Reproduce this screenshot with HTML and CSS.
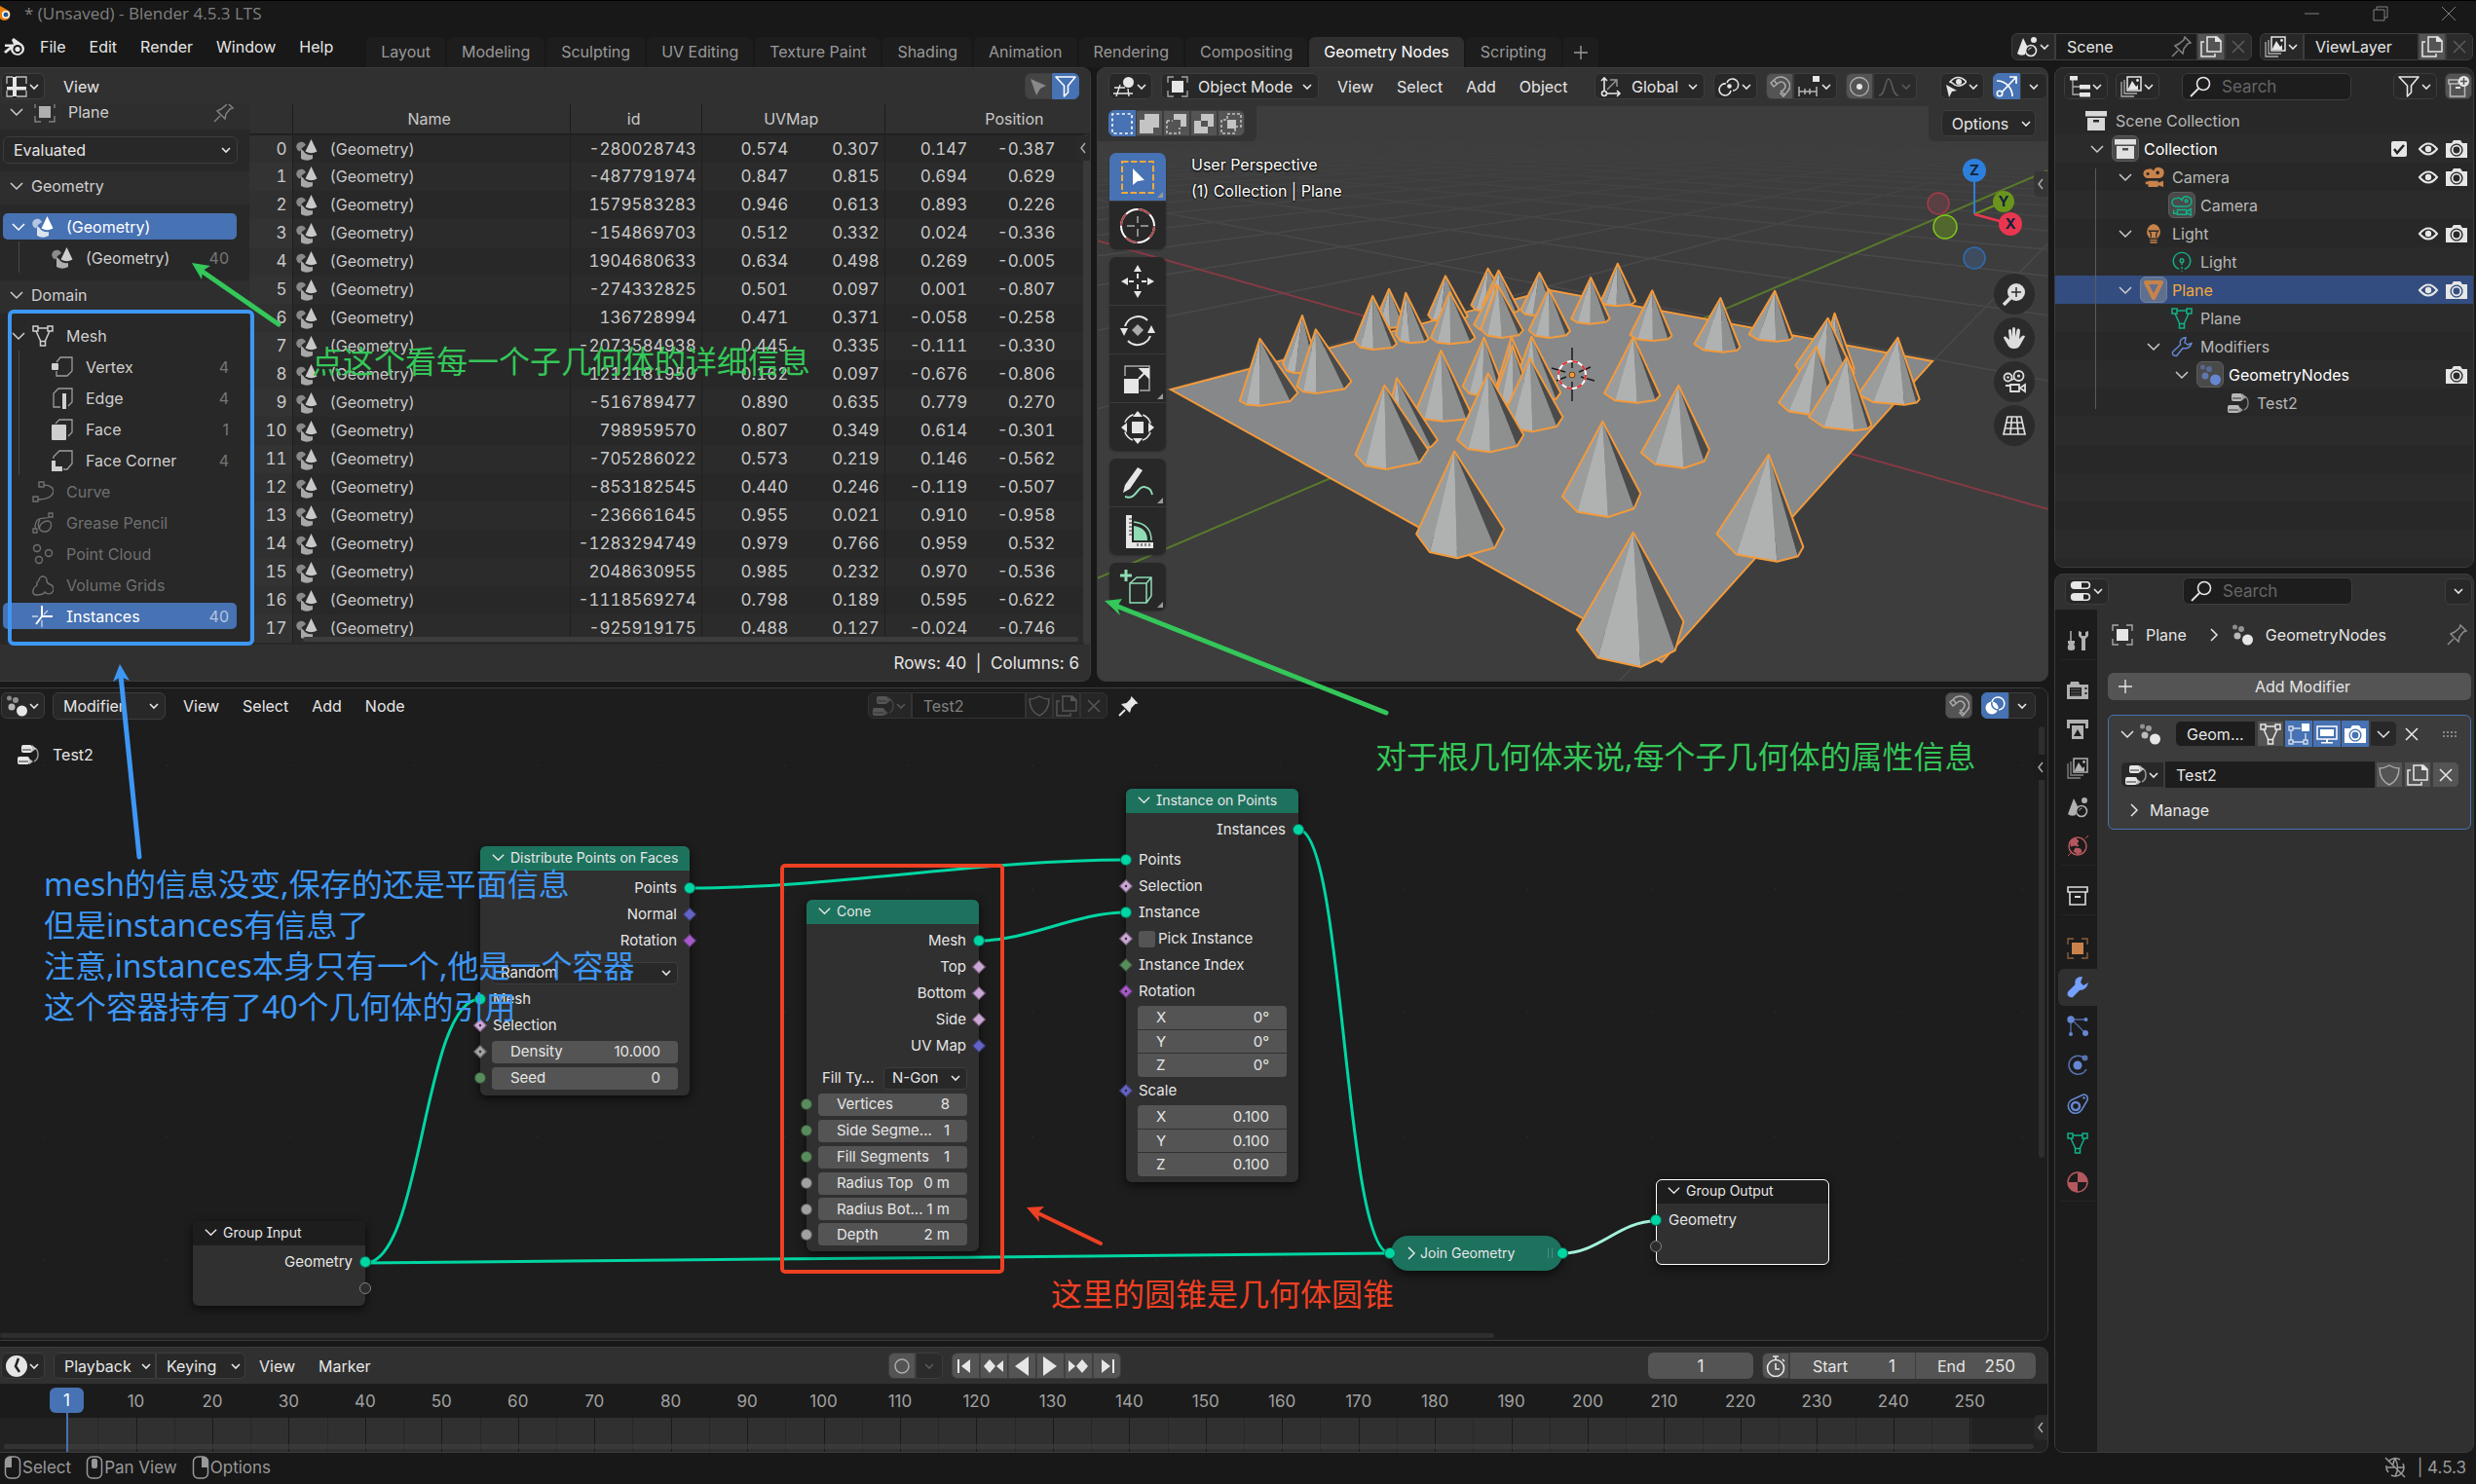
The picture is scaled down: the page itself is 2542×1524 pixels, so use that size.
FILE: index.html
```html
<!DOCTYPE html>
<html lang="en">
<head>
<meta charset="utf-8">
<title>* (Unsaved) - Blender 4.5.3 LTS</title>
<link rel="stylesheet" href="styles.css">
</head>
<body>
<svg class="defs" aria-hidden="true">
<defs>
<symbol id="down" viewBox="0 0 12 12"><path d="M2 4l4 4 4-4" fill="none" stroke="currentColor" stroke-width="1.6"/></symbol>
<symbol id="open" viewBox="0 0 16 16"><path d="M2 5l6 6 6-6" fill="none" stroke="currentColor" stroke-width="1.5"/></symbol>
<symbol id="closed" viewBox="0 0 16 16"><path d="M5 2l6 6-6 6" fill="none" stroke="currentColor" stroke-width="1.5"/></symbol>
<symbol id="left" viewBox="0 0 12 16"><path d="M8 3L4 8l4 5" fill="none" stroke="currentColor" stroke-width="1.5"/></symbol>
<symbol id="logo" viewBox="0 0 24 22"><path d="M11 2l9 6.6a7 6.6 0 1 1-12 5.2L3 18l-2-2 6-5H2V8.600h9L9 4z" fill="currentColor"/><circle cx="15" cy="13.500" r="4.600" fill="#181818"/><circle cx="15" cy="13.500" r="2.600" fill="currentColor"/></symbol>
<symbol id="sheet" viewBox="0 0 22 22"><path d="M1 8V1h6M10 1h11v7M21 15v6H11M7 21H1v-6" fill="none" stroke="currentColor" stroke-width="1.300" opacity=".8"/><path d="M7 1h4v10h10v3.500H11V21H7v-6.500H1V11h6z" fill="currentColor"/></symbol>
<symbol id="object" viewBox="0 0 22 22"><path d="M1 7V1h6M15 1h6v6M21 15v6h-6M7 21H1v-6" fill="none" stroke="currentColor" stroke-width="1.400" opacity=".65"/><rect x="5" y="5" width="12" height="12" fill="currentColor"/></symbol>
<symbol id="pin" viewBox="0 0 22 22"><path d="M1 21l6-6M4 10l8 8 1-5 4-5 3-1-6-6-1 3-5 4z" fill="none" stroke="currentColor" stroke-width="1.500"/></symbol>
<symbol id="pinned" viewBox="0 0 22 22"><path d="M1 21l6-6" stroke="currentColor" stroke-width="2"/><path d="M3 9l9 9 1.500-5 4-4 3-.5L13.500 1l-1 3-4 4z" fill="currentColor"/></symbol>
<symbol id="geo" viewBox="0 0 22 22"><path d="M10 6a5 5 0 1 0-6 6.500L6 9z" fill="currentColor" opacity=".6"/><path d="M15.500 0l6 12.500q-6 3.500-12 0z" fill="currentColor"/><path d="M5 10q3 2 4 4 4 3 8 2v4q-6 3.500-12 0z" fill="currentColor" opacity=".8"/></symbol>
<symbol id="mesh" viewBox="0 0 22 22"><path d="M6 3h10M4 6l5 11M18 6l-5 11" stroke="currentColor" stroke-width="1.500"/><path d="M1 1h5v5H1zM16 1h5v5h-5zM8.500 16.500h5v4.500h-5z" fill="none" stroke="currentColor" stroke-width="1.500"/></symbol>
<symbol id="vert" viewBox="0 0 22 22"><path d="M5 6l4-5h12v14l-5 5H5v-5" fill="none" stroke="currentColor" stroke-width="1.300" opacity=".7"/><rect x="0" y="7" width="7" height="7" rx="1" fill="currentColor"/></symbol>
<symbol id="edge" viewBox="0 0 22 22"><path d="M9 20H2V6l5-5h14v14l-4 4" fill="none" stroke="currentColor" stroke-width="1.300" opacity=".7"/><rect x="11" y="6" width="4" height="16" fill="currentColor"/></symbol>
<symbol id="face" viewBox="0 0 22 22"><path d="M4 5l4-4h13v13l-4 4" fill="none" stroke="currentColor" stroke-width="1.300" opacity=".7"/><rect y="6" width="15" height="16" rx="1" fill="currentColor"/></symbol>
<symbol id="corner" viewBox="0 0 22 22"><path d="M2 9V7l6-6h13v13l-5 6h-4" fill="none" stroke="currentColor" stroke-width="1.300" opacity=".7"/><path d="M0 11h4v6h7v5H0z" fill="currentColor"/></symbol>
<symbol id="curve" viewBox="0 0 22 22"><path d="M1 16h5v5H1zM7 1h5v5H7zM6 19c20 0 20-15 6-15" fill="none" stroke="currentColor" stroke-width="1.400"/></symbol>
<symbol id="gp" viewBox="0 0 22 22"><path d="M1 17h4v4H1zM17 1h4v4h-4zM3 17C3 2 12 8 18 5M8 18c-2-6 5-9 8-9 6 0 4 11-3 11s-8-8-5-12" fill="none" stroke="currentColor" stroke-width="1.300"/></symbol>
<symbol id="cloud" viewBox="0 0 22 22"><g fill="none" stroke="currentColor" stroke-width="1.400"><circle cx="5" cy="5" r="3.500"/><circle cx="17" cy="10" r="3.500"/><circle cx="7" cy="17" r="3.500"/></g></symbol>
<symbol id="volume" viewBox="0 0 22 22"><path d="M7 6a4 4 0 1 1 8 0q0 3 3 4a5 5 0 1 1-5 8q-2 3-8 3-5 0-4-5 1-3 4-5-1-3 2-5z" fill="none" stroke="currentColor" stroke-width="1.400"/></symbol>
<symbol id="axes" viewBox="0 0 22 22"><path d="M10 0v11h11M10 11l-6 8" fill="none" stroke="currentColor" stroke-width="2"/><path d="M0 11h6M10 15v7M12 9l4-4" stroke="currentColor" stroke-width="1.300" opacity=".7"/></symbol>
<symbol id="arrow" viewBox="0 0 22 22"><path d="M3 3l16 7-6 3-4 7z" fill="currentColor"/></symbol>
<symbol id="funnel" viewBox="0 0 22 22"><path d="M1 1h20l-7.500 9v7l-4 4V10z" fill="none" stroke="currentColor" stroke-width="1.600" stroke-linejoin="round"/></symbol>
<symbol id="view3d" viewBox="0 0 22 22"><path d="M1 12h11M0 18h20M7 9L3 21M15 13l1 8" stroke="currentColor" stroke-width="1.400"/><circle cx="15.500" cy="6.500" r="5.500" fill="currentColor"/></symbol>
<symbol id="sel1" viewBox="0 0 22 22"><rect x="1" y="1" width="20" height="20" fill="none" stroke="currentColor" stroke-width="1.600" stroke-dasharray="3 2.700" stroke-dashoffset="1.500"/></symbol>
<symbol id="sel2" viewBox="0 0 22 22"><path d="M6 1h15v14h-6v6H1V7h5z" fill="currentColor"/></symbol>
<symbol id="sel3" viewBox="0 0 22 22"><path d="M8 1h13v13h-6V7H8z" fill="currentColor"/><path d="M1 8h6M1 8v13h13v-6" fill="none" stroke="currentColor" stroke-width="1.500" stroke-dasharray="3 2"/></symbol>
<symbol id="sel4" viewBox="0 0 22 22"><path fill-rule="evenodd" d="M8 1h13v13h-6v7H1V8h7zM8 8v6h7V8z" fill="currentColor"/></symbol>
<symbol id="sel5" viewBox="0 0 22 22"><path d="M7 6V1h14v13h-5M6 7H1v14h14v-5" fill="none" stroke="currentColor" stroke-width="1.500" stroke-dasharray="3 2"/><rect x="7" y="7" width="9" height="9" fill="currentColor"/></symbol>
<symbol id="orient" viewBox="0 0 22 22"><g fill="none" stroke="currentColor" stroke-width="1.600"><path d="M4 15V2M1 5l3-3 3 3M7 18h13M17 15l3 3-3 3"/><circle cx="4" cy="18" r="2.500"/></g><path d="M7 14l9-9M10 4h7v7" fill="none" stroke="currentColor" stroke-width="1.400" opacity=".6"/></symbol>
<symbol id="pivot" viewBox="0 0 22 22"><g fill="none" stroke="currentColor" stroke-width="1.600"><path d="M9 7a6 6 0 1 1 6 8M13 15a6 6 0 1 1-5-7"/></g><circle cx="11.500" cy="10.500" r="2.300" fill="currentColor"/></symbol>
<symbol id="magnet" viewBox="0 0 22 22"><path d="M2 7l6-5c9-4 17 6 12 13l-5 6-3-3 4-5c3-4-2-9-6-6L5 11zM5 4l3 4M12 15l4 4" fill="none" stroke="currentColor" stroke-width="1.500"/></symbol>
<symbol id="snapinc" viewBox="0 0 22 22"><path d="M1 11v10M7 13v6M12 13v6M19 11v10M1 16h18" stroke="currentColor" stroke-width="1.500" opacity=".75"/><rect x="15" y="0" width="7" height="6" fill="currentColor"/></symbol>
<symbol id="prop" viewBox="0 0 22 22"><circle cx="11" cy="11" r="9.500" fill="none" stroke="currentColor" stroke-width="1.300" opacity=".6"/><circle cx="11" cy="11" r="3" fill="currentColor"/></symbol>
<symbol id="falloff" viewBox="0 0 22 22"><path d="M1 20c7 0 6-17 10-17s3 17 10 17" fill="none" stroke="currentColor" stroke-width="1.600"/></symbol>
<symbol id="eyesel" viewBox="0 0 22 22"><path d="M5 6q8-9 17 0-8 8-15 1z" fill="none" stroke="currentColor" stroke-width="1.600"/><circle cx="14" cy="6" r="3" fill="currentColor"/><path d="M1 9l11 6-5 1-3 6z" fill="currentColor"/></symbol>
<symbol id="gizmo" viewBox="0 0 22 22"><path d="M1 5c10 0 16 8 16 16M6 17L20 2M14 1h7v7" fill="none" stroke="currentColor" stroke-width="1.700"/><circle cx="4" cy="18" r="2.700" fill="none" stroke="currentColor" stroke-width="1.600"/></symbol>
<symbol id="overlay" viewBox="0 0 22 22"><path d="M8 7a6.500 6.500 0 1 1 7 8" fill="none" stroke="currentColor" stroke-width="1.600"/><circle cx="8" cy="13" r="6.500" fill="currentColor"/><path d="M8 7a6.500 6.500 0 0 0 7 8" fill="none" stroke="#4772b3" stroke-width="1.500"/></symbol>
<symbol id="scenes" viewBox="0 0 22 22"><path d="M7 2l4 8-2 9q-5 2-8-1z" fill="currentColor"/><circle cx="18" cy="4" r="3" fill="currentColor"/><circle cx="15" cy="15" r="5.500" fill="none" stroke="currentColor" stroke-width="1.600"/><path d="M12.500 14.500q1-2.500 3-2.500" fill="none" stroke="currentColor"/></symbol>
<symbol id="images" viewBox="0 0 22 22"><path d="M1 6v15h13M4 4v14h13" fill="none" stroke="currentColor" stroke-width="1.300" opacity=".7"/><rect x="7" y="1" width="14" height="14" fill="none" stroke="currentColor" stroke-width="1.500"/><path d="M8 13l4-8 4 6 2-2v5H8z" fill="currentColor"/><circle cx="17.500" cy="4.500" r="1.400" fill="currentColor"/></symbol>
<symbol id="copy" viewBox="0 0 22 22"><path d="M4 6H1v15h14v-3M7 1h10l4 4v11H7z" fill="none" stroke="currentColor" stroke-width="1.500"/><path d="M15 0l7 6h-7z" fill="currentColor"/></symbol>
<symbol id="x" viewBox="0 0 22 22"><path d="M5 5l12 12M17 5L5 17" stroke="currentColor" stroke-width="1.600"/></symbol>
<symbol id="plus" viewBox="0 0 16 16"><path d="M8 1v14M1 8h14" stroke="currentColor" stroke-width="1.400"/></symbol>
<symbol id="tree" viewBox="0 0 22 22"><path d="M4 4v15h7M4 11h7" fill="none" stroke="currentColor" stroke-width="1.300" opacity=".7"/><path d="M1 0h8v4.500H1zM11 9h11v4.500H11zM11 17h11v4.500H11z" fill="currentColor"/></symbol>
<symbol id="search" viewBox="0 0 22 22"><circle cx="14" cy="8" r="6.500" fill="none" stroke="currentColor" stroke-width="1.600"/><path d="M9 13l-8 8" stroke="currentColor" stroke-width="1.800"/></symbol>
<symbol id="newcoll" viewBox="0 0 22 22"><path d="M1 4h10v4H1zM2.500 8v13h15v-10" fill="none" stroke="currentColor" stroke-width="1.500" opacity=".7"/><path d="M8 12h5" stroke="currentColor" stroke-width="2"/><circle cx="16.500" cy="5.500" r="5.500" fill="currentColor"/><path d="M16.500 2v7M13 5.500h7" stroke="#545454" stroke-width="1.500"/></symbol>
<symbol id="coll" viewBox="0 0 22 22"><path fill-rule="evenodd" d="M0 1h22v5.500H0zM2 8h18v13H2zM8 10v2.500h6V10z" fill="currentColor"/></symbol>
<symbol id="collo" viewBox="0 0 22 22"><path d="M1 2h20v5H1zM3 7v13h16V7" fill="none" stroke="currentColor" stroke-width="1.600"/><path d="M8 12h6" stroke="currentColor" stroke-width="2"/></symbol>
<symbol id="eye" viewBox="0 0 22 22"><path d="M2 11q9-11 18 0-9 11-18 0z" fill="none" stroke="currentColor" stroke-width="2"/><circle cx="11" cy="11" r="3.200" fill="currentColor"/></symbol>
<symbol id="cam" viewBox="0 0 22 22"><path fill-rule="evenodd" d="M0 5h6l2-3h7l2 3h5v15H0zM11 5.500a6.500 6.500 0 1 0 .1 0z" fill="currentColor"/><circle cx="11" cy="12" r="4.300" fill="none" stroke="currentColor" stroke-width="1.800"/></symbol>
<symbol id="camobj" viewBox="0 0 24 24"><path fill-rule="evenodd" d="M6 3a5 5 0 0 1 6 2 6 6 0 1 1 6 8H5a5 5 0 0 1 1-10zM5.500 6.500a1.700 1.700 0 1 0 .1 0zM16.500 5a2 2 0 1 0 .1 0zM6 16h11v2l6-2v7l-6-2v2H6v-3H3v-3h3z" fill="currentColor"/></symbol>
<symbol id="camdata" viewBox="0 0 24 24"><g fill="none" stroke="currentColor" stroke-width="1.600"><path d="M6 4a5 5 0 0 1 6 2 5.500 5.500 0 1 1 6 7H5a4.500 4.500 0 0 1 1-9zM7 17h10v5H7zM17 19l5-3v7l-5-3M3 17v4h4"/><circle cx="17" cy="7" r="1.500"/></g></symbol>
<symbol id="camview" viewBox="0 0 24 24"><g fill="none" stroke="currentColor" stroke-width="1.800"><circle cx="5.500" cy="7.500" r="4"/><circle cx="16.500" cy="6" r="5"/><path d="M8 15h9v7H8zM3 16h5v4M23 15l-5 3.500 5 3.500zM9 10l3-1"/></g><circle cx="5.500" cy="7.500" r="1.300" fill="currentColor"/><circle cx="16.500" cy="6" r="1.600" fill="currentColor"/></symbol>
<symbol id="light" viewBox="0 0 22 24"><path d="M11 1a9 9 0 0 1 5 15v1H6v-1A9 9 0 0 1 11 1zM7 18.500h8V20H7zM7 21h8v1.500H7z" fill="currentColor"/><path d="M8 16v-4L6 9h10l-2 3v4" fill="none" stroke="#2a2a2a" stroke-width="1.400"/></symbol>
<symbol id="lightdata" viewBox="0 0 22 24"><path d="M8 20a9.500 9.500 0 1 1 6 0" fill="none" stroke="currentColor" stroke-width="1.500"/><circle cx="11" cy="10.500" r="2" fill="none" stroke="currentColor" stroke-width="1.500"/><path d="M11 13v10" stroke="currentColor" stroke-width="1.500" stroke-dasharray="2.500 2"/></symbol>
<symbol id="meshobj" viewBox="0 0 22 22"><path d="M3 3h16l-8 16z" fill="none" stroke="currentColor" stroke-width="4" stroke-linejoin="round"/></symbol>
<symbol id="wrencho" viewBox="0 0 22 22"><path d="M15 1.500q-7 1-5.500 7.500L1.500 16.500q-1 4 4 4L12 12.500q7 1.500 9-5l-4 1.500-3-2z" fill="none" stroke="currentColor" stroke-width="1.500" stroke-linejoin="round"/></symbol>
<symbol id="wrench" viewBox="0 0 22 22"><path d="M16 0Q7 0 8.500 8L1 15.500q-2 5.500 4.500 6L13 14q7 0 9-8l-5 3-3-3z" fill="currentColor"/></symbol>
<symbol id="gn" viewBox="0 0 22 22"><g fill="currentColor"><circle cx="3.500" cy="3" r="2.500" opacity=".5"/><circle cx="10" cy="5" r="3" opacity=".55"/><circle cx="6" cy="12" r="3.500" opacity=".75"/><circle cx="16.500" cy="16" r="5.500"/></g></symbol>
<symbol id="ntree" viewBox="0 0 22 22"><rect x="4" y="1" width="11" height="8" rx="2" fill="currentColor"/><rect x="0" y="13" width="12" height="8" rx="2" fill="currentColor"/><path d="M5 6h9M1 18h10" stroke="#333" stroke-width="1"/><path d="M17 4q4 1 4 7 0 5-4 7" fill="none" stroke="currentColor" stroke-width="1.500" opacity=".6"/><path d="M15 1l4 4-4 3zM12 15l4 3-4 3z" fill="currentColor" opacity=".8"/></symbol>
<symbol id="props" viewBox="0 0 22 22"><rect x=".8" y="1" width="20.400" height="8" rx="4" fill="currentColor"/><rect x=".8" y="13" width="20.400" height="8" rx="4" fill="currentColor"/><path d="M12 2.500h5a2.500 2.500 0 0 1 0 5h-5zM14 14.500h3a2.500 2.500 0 0 1 0 5h-3z" fill="#222"/></symbol>
<symbol id="tools" viewBox="0 0 22 22"><path d="M4 1v10" stroke="currentColor" stroke-width="1.500"/><path d="M1 11h7v3H7q2 3 1 6-4 2-7 0-1-3 1-6H1zM12 1v5l3 3v12h4V9l3-3V1l-3 1v4h-4V2z" fill="currentColor"/></symbol>
<symbol id="render" viewBox="0 0 22 22"><path fill-rule="evenodd" d="M0 5h3l1-3h8l1 3h9v15H0zM3 8v9h12V8zM18.500 8v2h2V8zM18.500 13v2h2v-2z" fill="currentColor"/><path d="M4 10h10M4 13h10M4 16h10" stroke="currentColor" stroke-width="1" opacity=".5"/></symbol>
<symbol id="output" viewBox="0 0 22 22"><path fill-rule="evenodd" d="M0 1h22v9h-3V5H3v5H0zM5 7h12v14H5zM7 18h8l-4-7z" fill="currentColor"/></symbol>
<symbol id="world" viewBox="0 0 22 22"><circle cx="11" cy="11" r="9" fill="none" stroke="currentColor" stroke-width="1.500"/><path d="M4 5l5-2 3 3-2 2 2 3-4-1-4 1zM9 13l5 1 1 3-4 2-4-3zM1 21l3-3M19 3l3-3" fill="currentColor" stroke="currentColor"/></symbol>
<symbol id="particles" viewBox="0 0 22 22"><path d="M5 4h14M4 6v12M7 6l12 12" stroke="currentColor" stroke-width="1.400" opacity=".7"/><g fill="currentColor"><circle cx="4" cy="4" r="3.700"/><circle cx="19.500" cy="4" r="2"/><circle cx="19" cy="18" r="3"/><circle cx="4" cy="19" r="2"/></g></symbol>
<symbol id="physics" viewBox="0 0 22 22"><path d="M17 3A9.500 9.500 0 1 0 20 15" fill="none" stroke="currentColor" stroke-width="1.500" opacity=".8"/><circle cx="11" cy="11" r="4.500" fill="currentColor"/><circle cx="18.500" cy="3.500" r="3" fill="currentColor" opacity=".8"/></symbol>
<symbol id="constraint" viewBox="0 0 22 22"><path d="M4 7L17 1q5 0 4 6l-6 10A7.500 7.500 0 1 1 4 7z" fill="none" stroke="currentColor" stroke-width="1.600"/><circle cx="9" cy="13" r="4" fill="none" stroke="currentColor" stroke-width="2.500"/><circle cx="17.500" cy="4.500" r="1.300" fill="currentColor"/></symbol>
<symbol id="material" viewBox="0 0 22 22"><circle cx="11" cy="11" r="10" fill="none" stroke="currentColor" stroke-width="1.500"/><path d="M11 1a10 10 0 0 1 10 10H11zM11 11v10A10 10 0 0 1 1 11z" fill="currentColor"/></symbol>
<symbol id="shield" viewBox="0 0 22 22"><path d="M11 1q5 3 10 3 0 12-10 17Q1 16 1 4q5 0 10-3z" fill="none" stroke="currentColor" stroke-width="1.400"/></symbol>
<symbol id="editmode" viewBox="0 0 22 22"><path d="M1 3h4v4H1zM1 17h4v4H1zM16 17h4v4h-4zM5 5h8M3 7v10M5 19h11M18 10v7" fill="none" stroke="currentColor" stroke-width="1.400" opacity=".75"/><rect x="14" y="0" width="8" height="8" fill="currentColor"/></symbol>
<symbol id="monitor" viewBox="0 0 22 22"><rect x="1" y="3" width="20" height="13" fill="none" stroke="currentColor" stroke-width="1.500"/><path d="M4 6h14v7H4zM10 16h2v3h5v1.500H5V19h5z" fill="currentColor"/></symbol>
<symbol id="clock" viewBox="0 0 22 22"><circle cx="11" cy="11" r="11" fill="currentColor"/><path d="M13 3l-3 8 4 6" fill="none" stroke="#222" stroke-width="2.500"/></symbol>
<symbol id="stopwatch" viewBox="0 0 22 22"><circle cx="11" cy="13" r="8.500" fill="none" stroke="currentColor" stroke-width="1.600"/><path d="M8 1h6M11 1v3M18 4l2 2M11 8v6h4" fill="none" stroke="currentColor" stroke-width="1.600"/></symbol>
<symbol id="ring" viewBox="0 0 22 22"><circle cx="11" cy="11" r="7" fill="none" stroke="currentColor" stroke-width="1.500"/></symbol>
<symbol id="first" viewBox="0 0 22 22"><path d="M3 4h2v14H3zM16 4v14l-9-7z" fill="currentColor"/></symbol>
<symbol id="prevkey" viewBox="0 0 22 22"><path d="M7 4l6 7-6 7-6-7zM21 5v12l-7-6z" fill="currentColor"/></symbol>
<symbol id="playback" viewBox="0 0 22 22"><path d="M18 1v20L4 11z" fill="currentColor"/></symbol>
<symbol id="mouseL" viewBox="0 0 18 24"><rect x="1.500" y="1" width="15" height="22" rx="5" fill="none" stroke="currentColor" stroke-width="1.500"/><path d="M1 12V6q0-5 7-5v11z" fill="currentColor"/></symbol>
<symbol id="mouseM" viewBox="0 0 18 24"><rect x="1.500" y="1" width="15" height="22" rx="5" fill="none" stroke="currentColor" stroke-width="1.500"/><rect x="6" y="3" width="6" height="10" rx="2" fill="currentColor"/></symbol>
<symbol id="net" viewBox="0 0 22 22"><path d="M4 5a9 9 0 0 1 12-2M19 7a9 9 0 0 1-12 12M2 9a9 9 0 0 0 2 7M11 2q5 9 0 18M11 2q-2 3-2 6M3 11h7M14 11h6M1 1l20 20" fill="none" stroke="currentColor" stroke-width="1.500"/></symbol>
<symbol id="hand" viewBox="0 0 24 24"><path d="M7 14L6 5q0-2 1.500-2T9 5l1 6V3q0-2 1.500-2T13 3v8l1.500-7q.5-2 2-1.500T18 5l-1 8 3-3q2-1 3 .5l-5 9q-2 4-7 3.500-4 0-6-4l-4-7q0-2 2-1.500z" fill="currentColor"/></symbol>
<symbol id="zoomin" viewBox="0 0 24 24"><circle cx="14" cy="10" r="9" fill="currentColor"/><path d="M8 16l-7 7" stroke="currentColor" stroke-width="3.500"/><path d="M14 5v10M9 10h10" stroke="#2b2b2b" stroke-width="1.500"/></symbol>
<symbol id="grid" viewBox="0 0 24 24"><path d="M5 3h14l4 18H1zM4 9h16M3 15h19M9.500 3L8 21M14.500 3L16 21" fill="none" stroke="currentColor" stroke-width="1.700"/></symbol>
</defs>
</svg>

<header class="titlebar">
  <svg class="app" viewBox="0 0 14 18"><path d="M0 1l9 5a6 6 0 1 1-9 8z" fill="#e87d0d"/><circle cx="6" cy="10" r="4" fill="#fff"/><circle cx="6" cy="10" r="2.500" fill="#265787"/></svg>
  <span class="wintitle">* (Unsaved) - Blender 4.5.3 LTS</span>
  <div class="winctl">
    <button aria-label="Minimize"><svg viewBox="0 0 16 16"><path d="M0 8h15" stroke="currentColor"/></svg></button>
    <button aria-label="Restore"><svg viewBox="0 0 16 16"><path d="M1 4h11v11H1zM4 4V1h11v11h-3" fill="none" stroke="currentColor"/></svg></button>
    <button aria-label="Close"><svg viewBox="0 0 16 16"><path d="M1 1l14 14M15 1L1 15" stroke="currentColor"/></svg></button>
  </div>
</header>

<nav class="topbar">
  <svg class="logo"><use href="#logo"/></svg>
  <div class="menus"><button>File</button><button>Edit</button><button>Render</button><button>Window</button><button>Help</button></div>
  <div class="tabs">
    <button>Layout</button><button>Modeling</button><button>Sculpting</button><button>UV Editing</button><button>Texture Paint</button><button>Shading</button><button>Animation</button><button>Rendering</button><button>Compositing</button><button class="on">Geometry Nodes</button><button>Scripting</button><button class="add" aria-label="Add workspace"><svg class="s"><use href="#plus"/></svg></button>
  </div>
  <div class="joined idfield">
    <button class="btn type" aria-label="Browse scene"><svg class="i"><use href="#scenes"/></svg><svg class="c"><use href="#down"/></svg></button>
    <label class="namebox scenebox"><input aria-label="Scene" value="Scene"><svg class="i dim"><use href="#pin"/></svg></label>
    <button class="btn sq lit" aria-label="New scene"><svg class="i"><use href="#copy"/></svg></button>
    <button class="btn sq off" aria-label="Delete scene"><svg class="i"><use href="#x"/></svg></button>
  </div>
  <div class="joined idfield">
    <button class="btn type" aria-label="Browse view layer"><svg class="i"><use href="#images"/></svg><svg class="c"><use href="#down"/></svg></button>
    <label class="namebox layerbox"><input aria-label="View layer" value="ViewLayer"></label>
    <button class="btn sq lit" aria-label="New view layer"><svg class="i"><use href="#copy"/></svg></button>
    <button class="btn sq off" aria-label="Delete view layer"><svg class="i"><use href="#x"/></svg></button>
  </div>
</nav>

<main class="workspace">
<div class="col-left">
<div class="row-top">

<section class="editor sheet">
  <header class="bar">
    <button class="btn type" aria-label="Editor type"><svg class="i"><use href="#sheet"/></svg><svg class="c"><use href="#down"/></svg></button>
    <div class="menus"><button>View</button></div>
    <div class="joined push">
      <button class="btn sq lit faint" aria-label="Selected only"><svg class="i"><use href="#arrow"/></svg></button>
      <button class="btn sq blue" aria-label="Use filter"><svg class="i"><use href="#funnel"/></svg></button>
    </div>
  </header>
  <div class="sheetbody">
    <aside class="side">
      <div class="ctx"><svg class="s"><use href="#open"/></svg><svg class="i"><use href="#object"/></svg><span>Plane</span><svg class="i dim end"><use href="#pin"/></svg></div>
      <div class="evalbox"><select class="drop" aria-label="Object evaluation state"><option>Evaluated</option></select></div>
      <h2 class="sec"><svg class="s"><use href="#open"/></svg>Geometry</h2>
      <ul class="list geolist">
        <li class="sel"><svg class="s"><use href="#open"/></svg><svg class="i"><use href="#geo"/></svg><span>(Geometry)</span></li>
        <li class="sub lined"><svg class="i"><use href="#geo"/></svg><span>(Geometry)</span><em>40</em></li>
      </ul>
      <h2 class="sec"><svg class="s"><use href="#open"/></svg>Domain</h2>
      <ul class="list domlist">
        <li><svg class="s"><use href="#open"/></svg><svg class="i"><use href="#mesh"/></svg><span>Mesh</span></li>
        <li class="sub lined"><svg class="i"><use href="#vert"/></svg><span>Vertex</span><em>4</em></li>
        <li class="sub lined"><svg class="i"><use href="#edge"/></svg><span>Edge</span><em>4</em></li>
        <li class="sub lined"><svg class="i"><use href="#face"/></svg><span>Face</span><em>1</em></li>
        <li class="sub lined"><svg class="i"><use href="#corner"/></svg><span>Face Corner</span><em>4</em></li>
        <li class="none"><svg class="i"><use href="#curve"/></svg><span>Curve</span></li>
        <li class="none"><svg class="i"><use href="#gp"/></svg><span>Grease Pencil</span></li>
        <li class="none"><svg class="i"><use href="#cloud"/></svg><span>Point Cloud</span></li>
        <li class="none"><svg class="i"><use href="#volume"/></svg><span>Volume Grids</span></li>
        <li class="sel flat"><svg class="i"><use href="#axes"/></svg><span>Instances</span><em>40</em></li>
      </ul>
    </aside>
    <div class="tablewrap">
      <table>
        <colgroup><col class="w-idx"><col class="w-name"><col class="w-id"><col class="w-uv"><col class="w-uv"><col class="w-pos"><col class="w-pos"><col class="w-pos"></colgroup>
        <thead><tr><th></th><th>Name</th><th>id</th><th colspan="2">UVMap</th><th colspan="3">Position</th></tr></thead>
        <tbody>
        <tr><th>0</th><td><svg class="i"><use href="#geo"/></svg>(Geometry)</td><td>-280028743</td><td>0.574</td><td>0.307</td><td>0.147</td><td>-0.387</td><td></td></tr>
        <tr><th>1</th><td><svg class="i"><use href="#geo"/></svg>(Geometry)</td><td>-487791974</td><td>0.847</td><td>0.815</td><td>0.694</td><td>0.629</td><td></td></tr>
        <tr><th>2</th><td><svg class="i"><use href="#geo"/></svg>(Geometry)</td><td>1579583283</td><td>0.946</td><td>0.613</td><td>0.893</td><td>0.226</td><td></td></tr>
        <tr><th>3</th><td><svg class="i"><use href="#geo"/></svg>(Geometry)</td><td>-154869703</td><td>0.512</td><td>0.332</td><td>0.024</td><td>-0.336</td><td></td></tr>
        <tr><th>4</th><td><svg class="i"><use href="#geo"/></svg>(Geometry)</td><td>1904680633</td><td>0.634</td><td>0.498</td><td>0.269</td><td>-0.005</td><td></td></tr>
        <tr><th>5</th><td><svg class="i"><use href="#geo"/></svg>(Geometry)</td><td>-274332825</td><td>0.501</td><td>0.097</td><td>0.001</td><td>-0.807</td><td></td></tr>
        <tr><th>6</th><td><svg class="i"><use href="#geo"/></svg>(Geometry)</td><td>136728994</td><td>0.471</td><td>0.371</td><td>-0.058</td><td>-0.258</td><td></td></tr>
        <tr><th>7</th><td><svg class="i"><use href="#geo"/></svg>(Geometry)</td><td>-2073584938</td><td>0.445</td><td>0.335</td><td>-0.111</td><td>-0.330</td><td></td></tr>
        <tr><th>8</th><td><svg class="i"><use href="#geo"/></svg>(Geometry)</td><td>1212181950</td><td>0.162</td><td>0.097</td><td>-0.676</td><td>-0.806</td><td></td></tr>
        <tr><th>9</th><td><svg class="i"><use href="#geo"/></svg>(Geometry)</td><td>-516789477</td><td>0.890</td><td>0.635</td><td>0.779</td><td>0.270</td><td></td></tr>
        <tr><th>10</th><td><svg class="i"><use href="#geo"/></svg>(Geometry)</td><td>798959570</td><td>0.807</td><td>0.349</td><td>0.614</td><td>-0.301</td><td></td></tr>
        <tr><th>11</th><td><svg class="i"><use href="#geo"/></svg>(Geometry)</td><td>-705286022</td><td>0.573</td><td>0.219</td><td>0.146</td><td>-0.562</td><td></td></tr>
        <tr><th>12</th><td><svg class="i"><use href="#geo"/></svg>(Geometry)</td><td>-853182545</td><td>0.440</td><td>0.246</td><td>-0.119</td><td>-0.507</td><td></td></tr>
        <tr><th>13</th><td><svg class="i"><use href="#geo"/></svg>(Geometry)</td><td>-236661645</td><td>0.955</td><td>0.021</td><td>0.910</td><td>-0.958</td><td></td></tr>
        <tr><th>14</th><td><svg class="i"><use href="#geo"/></svg>(Geometry)</td><td>-1283294749</td><td>0.979</td><td>0.766</td><td>0.959</td><td>0.532</td><td></td></tr>
        <tr><th>15</th><td><svg class="i"><use href="#geo"/></svg>(Geometry)</td><td>2048630955</td><td>0.985</td><td>0.232</td><td>0.970</td><td>-0.536</td><td></td></tr>
        <tr><th>16</th><td><svg class="i"><use href="#geo"/></svg>(Geometry)</td><td>-1118569274</td><td>0.798</td><td>0.189</td><td>0.595</td><td>-0.622</td><td></td></tr>
        <tr><th>17</th><td><svg class="i"><use href="#geo"/></svg>(Geometry)</td><td>-925919175</td><td>0.488</td><td>0.127</td><td>-0.024</td><td>-0.746</td><td></td></tr>
        </tbody>
      </table>
      <i class="vscroll"></i><i class="hscroll"></i>
      <button class="flap sheetflap" aria-label="Show sidebar"><svg><use href="#left"/></svg></button>
    </div>
  </div>
  <footer class="counts">Rows: 40 &nbsp;|&nbsp; Columns: 6</footer>
</section>

<section class="editor view">
  <svg class="scene" id="scene" viewBox="1127 70 975 629" preserveAspectRatio="xMidYMid slice">
    <defs><linearGradient id="fade" x1="0" y1="0" x2="0" y2="1"><stop offset="0" stop-color="#000"/><stop offset="1" stop-color="#fff"/></linearGradient>
    <mask id="haze" maskUnits="userSpaceOnUse" x="1126" y="69" width="977" height="631"><rect x="1126" y="260" width="977" height="440" fill="#fff"/><rect x="1126" y="140" width="977" height="121" fill="url(#fade)"/></mask></defs>
    <rect x="1126" y="69" width="977" height="631" fill="#3d3d3d"/>
    <g id="floor" stroke="#4a4a4a" stroke-width="1.500" mask="url(#haze)"></g>
    <path d="M1126 247L2103 523" stroke="#863a45" stroke-width="2"/>
    <path d="M1126 594L2103 175" stroke="#587a2b" stroke-width="2"/>
    <path d="M1202 400L1591 298L1984 371L1706 680z" fill="#868889" stroke="#f29a3c" stroke-width="2"/>
    <g id="cones"></g>
    <g fill="none" stroke-width="2"><path d="M1614 357v21M1614 392v20M1593 378l14 4M1633 377l-12 5M1598 391l10-4M1637 391l-14-4" stroke="#1a1a1a" stroke-width="1.500"/><circle cx="1614" cy="385" r="14" stroke="#fff"/><circle cx="1614" cy="385" r="14" stroke="#e3302f" stroke-dasharray="5.500 5.500"/></g>
    <circle cx="1614" cy="385" r="3" fill="#f29a3c" stroke="#704010"/>
  </svg>
  <header class="bar">
    <button class="btn type" aria-label="Editor type"><svg class="i"><use href="#view3d"/></svg><svg class="c"><use href="#down"/></svg></button>
    <label class="icondrop mode"><svg class="i"><use href="#object"/></svg><select class="drop" aria-label="Mode"><option>Object Mode</option></select></label>
    <div class="menus"><button>View</button><button>Select</button><button>Add</button><button>Object</button></div>
    <label class="icondrop orient push"><svg class="i"><use href="#orient"/></svg><select class="drop" aria-label="Transform orientation"><option>Global</option></select></label>
    <button class="btn type" aria-label="Pivot point"><svg class="i"><use href="#pivot"/></svg><svg class="c"><use href="#down"/></svg></button>
    <div class="joined"><button class="btn sq lit soft" aria-label="Snap"><svg class="i"><use href="#magnet"/></svg></button><button class="btn type" aria-label="Snap to"><svg class="i"><use href="#snapinc"/></svg><svg class="c"><use href="#down"/></svg></button></div>
    <div class="joined"><button class="btn sq lit" aria-label="Proportional editing"><svg class="i"><use href="#prop"/></svg></button><button class="btn type off" aria-label="Falloff"><svg class="i"><use href="#falloff"/></svg><svg class="c"><use href="#down"/></svg></button></div>
    <button class="btn type gapped" aria-label="Selectability and visibility"><svg class="i"><use href="#eyesel"/></svg><svg class="c"><use href="#down"/></svg></button>
    <div class="joined cut"><button class="btn sq blue" aria-label="Gizmos"><svg class="i"><use href="#gizmo"/></svg></button><button class="btn sq" aria-label="Gizmo options"><svg class="c"><use href="#down"/></svg></button></div>
  </header>
  <div class="subbar">
    <div class="subleft"><div class="joined">
      <button class="btn sq blue" aria-label="Set"><svg class="i"><use href="#sel1"/></svg></button><button class="btn sq lit" aria-label="Extend"><svg class="i"><use href="#sel2"/></svg></button><button class="btn sq lit" aria-label="Subtract"><svg class="i"><use href="#sel3"/></svg></button><button class="btn sq lit" aria-label="Invert"><svg class="i"><use href="#sel4"/></svg></button><button class="btn sq lit" aria-label="Intersect"><svg class="i"><use href="#sel5"/></svg></button>
    </div></div>
    <div class="subright"><button class="btn opt">Options<svg class="c"><use href="#down"/></svg></button></div>
  </div>
  <div class="stage">
    <div class="toolbox">
      <div class="toolset">
        <button class="on more" aria-label="Select box"><svg viewBox="0 0 36 36"><rect x="2" y="2" width="32" height="32" fill="none" stroke="#f2a93c" stroke-width="2" stroke-dasharray="6.500 2.500"/><path d="M13 9l12 12-7 1-5 4z" fill="#fff"/></svg></button>
        <button aria-label="Cursor"><svg viewBox="0 0 36 36"><g fill="none" stroke-width="2"><circle cx="18" cy="18" r="17" stroke="#fff"/><circle cx="18" cy="18" r="17" stroke="#a8484d" stroke-dasharray="13.350"/><path d="M18 8v7M18 21v8M7 18h8M21 18h8" stroke="#aaa" stroke-width="1.500"/></g></svg></button>
      </div>
      <div class="toolset">
        <button aria-label="Move"><svg viewBox="0 0 36 36"><path d="M18 1l4 7h-8zM18 35l4-7h-8zM1 18l7-4v8zM35 18l-7-4v8z" fill="#e6e6e6"/><path d="M18 10v5M18 21v5M9 18h5M22 18h5" stroke="#e6e6e6" stroke-width="2"/></svg></button>
        <button aria-label="Rotate"><svg viewBox="0 0 36 36"><path d="M5 14a14 14 0 0 1 23-6M31 24a14 14 0 0 1-23 5" fill="none" stroke="#e6e6e6" stroke-width="2"/><path d="M18 12l6 6-6 6-6-6z" fill="#aaa"/><path d="M0 16h8l-4 8zM28 21h8l-4-8z" fill="#e6e6e6"/></svg></button>
        <button class="more" aria-label="Scale"><svg viewBox="0 0 36 36"><path d="M5 15V5h25v25H20" fill="none" stroke="#aaa" stroke-width="1.500"/><rect x="4" y="18" width="15" height="15" fill="#e6e6e6"/><path d="M19 18l7-7M21 8h8v8z" stroke="#e6e6e6" stroke-width="2" fill="#e6e6e6"/></svg></button>
        <button aria-label="Transform"><svg viewBox="0 0 36 36"><circle cx="18" cy="18" r="14" fill="none" stroke="#e6e6e6" stroke-width="1.500" stroke-dasharray="12 10" stroke-dashoffset="-5"/><path d="M12 12h12v12H12zM18 1l5 6H13zM18 35l5-6H13zM1 18l6-5v10zM35 18l-6-5v10z" fill="#e6e6e6"/></svg></button>
      </div>
      <div class="toolset">
        <button class="more" aria-label="Annotate"><svg viewBox="0 0 36 36"><path d="M18 2l5 3L10 24l-7 4 2-8z" fill="#e6e6e6"/><path d="M5 32c12 4 12-11 20-10 6 1 7 4 8 8" fill="none" stroke="#8fdcb5" stroke-width="2"/></svg></button>
        <button aria-label="Measure"><svg viewBox="0 0 36 36"><path d="M6 1h6v28h22v6H6z" fill="#e6e6e6"/><path d="M14 12q14 2 14 15H14z" fill="#8fdcb5"/><path d="M14 8q18 2 18 19" fill="none" stroke="#8fdcb5" stroke-width="1.500"/><path d="M18 33v-3M22 33v-3M26 33v-3M30 33v-3M9 5h3M9 9h3M9 13h3M9 17h3M9 21h3" stroke="#282828"/></svg></button>
      </div>
      <div class="toolset">
        <button class="more" aria-label="Add cube"><svg viewBox="0 0 36 36"><path d="M6 0v12M0 6h12" stroke="#8fdcb5" stroke-width="3"/><path d="M10 14h17v20H10zM10 14l7-6h15v19l-5 7M27 14l5-6" fill="none" stroke="#8fdcb5" stroke-width="1.500"/></svg></button>
      </div>
    </div>
    <p class="viewinfo">User Perspective<br>(1) Collection | Plane</p>
    <div class="navset">
      <svg class="navball" viewBox="0 0 106 106">
        <path d="M51 57V24" stroke="#2c7fdd" stroke-width="2"/><path d="M51 57l30-13" stroke="#6a951c" stroke-width="2"/><path d="M51 57l37 10" stroke="#ea3650" stroke-width="2.500"/>
        <circle cx="14" cy="46" r="11" fill="#5a3f43" stroke="#a33b4b" stroke-width="1.500"/><circle cx="21" cy="70" r="12" fill="#52672d" stroke="#83c71c" stroke-width="1.500"/>
        <circle cx="51" cy="12" r="12" fill="#2c7fdd"/><circle cx="81" cy="44" r="11" fill="#6a951c"/><circle cx="88" cy="67" r="12" fill="#ea3650"/>
        <g class="axis"><text x="51" y="17">Z</text><text x="81" y="49">Y</text><text x="88" y="72">X</text></g>
      </svg>
      <svg class="negz" viewBox="0 0 24 24"><circle cx="12" cy="12" r="11" fill="#3e4c5f" stroke="#2f6cb3" stroke-width="1.500"/></svg>
      <button aria-label="Zoom"><svg><use href="#zoomin"/></svg></button>
      <button aria-label="Pan"><svg><use href="#hand"/></svg></button>
      <button aria-label="Camera view"><svg><use href="#camview"/></svg></button>
      <button aria-label="Perspective"><svg><use href="#grid"/></svg></button>
    </div>
    <button class="flap viewflap" aria-label="Show sidebar"><svg><use href="#left"/></svg></button>
  </div>
</section>
</div>

<section class="editor nodes">
  <div class="canvas">
    <svg class="links">
      <path d="M375 591C434 591 434 320 493 320"/><path d="M375 591L1427 581"/><path d="M708 206C857 206 1007 177 1156 177"/><path d="M1005 260C1056 260 1105 231 1156 231"/><path d="M1333 146C1380 146 1380 581 1427 581"/><path class="hot" d="M1604 581C1642 581 1662 548 1700 548"/>
    </svg>
    <article class="node n-dist">
      <h3><svg class="s"><use href="#open"/></svg>Distribute Points on Faces</h3>
      <div class="out"><i class="geo"></i>Points</div><div class="out"><i class="dia vec"></i>Normal</div><div class="out"><i class="dia rot"></i>Rotation</div>
      <div class="ctl gap"><select class="drop" aria-label="Distribution method"><option>Random</option></select></div>
      <div class="in"><i class="geo"></i>Mesh</div><div class="in"><i class="dia bool dot"></i>Selection</div>
      <div class="ctl"><i class="dia flt dot"></i><label class="num">Density<input value="10.000"></label></div>
      <div class="ctl"><i class="int"></i><label class="num">Seed<input value="0"></label></div>
    </article>
    <article class="node n-gin dark">
      <h3><svg class="s"><use href="#open"/></svg>Group Input</h3>
      <div class="out"><i class="geo"></i>Geometry</div><div class="out"><i class="virt"></i></div>
    </article>
    <article class="node n-cone">
      <h3><svg class="s"><use href="#open"/></svg>Cone</h3>
      <div class="out"><i class="geo"></i>Mesh</div><div class="out"><i class="dia bool"></i>Top</div><div class="out"><i class="dia bool"></i>Bottom</div><div class="out"><i class="dia bool"></i>Side</div><div class="out"><i class="dia vec"></i>UV Map</div>
      <label class="ctl gap split"><span>Fill Ty...</span><select class="drop"><option>N-Gon</option></select></label>
      <div class="ctl"><i class="int"></i><label class="num">Vertices<input value="8"></label></div>
      <div class="ctl"><i class="int"></i><label class="num">Side Segme...<input value="1"></label></div>
      <div class="ctl"><i class="int"></i><label class="num">Fill Segments<input value="1"></label></div>
      <div class="ctl"><i class="flt"></i><label class="num">Radius Top<input value="0 m"></label></div>
      <div class="ctl"><i class="flt"></i><label class="num">Radius Bot...<input value="1 m"></label></div>
      <div class="ctl"><i class="flt"></i><label class="num">Depth<input value="2 m"></label></div>
    </article>
    <article class="node n-inst">
      <h3><svg class="s"><use href="#open"/></svg>Instance on Points</h3>
      <div class="out"><i class="geo"></i>Instances</div>
      <div class="in first"><i class="geo"></i>Points</div><div class="in"><i class="dia bool dot"></i>Selection</div><div class="in"><i class="geo"></i>Instance</div>
      <div class="in"><i class="dia bool dot"></i><label class="tick"><input type="checkbox">Pick Instance</label></div>
      <div class="in"><i class="dia int"></i>Instance Index</div><div class="in"><i class="dia rot dot"></i>Rotation</div>
      <div class="vecbox"><label class="num">X<input value="0°"></label><label class="num">Y<input value="0°"></label><label class="num">Z<input value="0°"></label></div>
      <div class="in"><i class="dia vec dot"></i>Scale</div>
      <div class="vecbox"><label class="num">X<input value="0.100"></label><label class="num">Y<input value="0.100"></label><label class="num">Z<input value="0.100"></label></div>
    </article>
    <article class="node n-join"><i class="geo l"></i><svg class="s"><use href="#closed"/></svg><span>Join Geometry</span><b></b><i class="geo r"></i></article>
    <article class="node n-gout dark">
      <h3><svg class="s"><use href="#open"/></svg>Group Output</h3>
      <div class="in"><i class="geo"></i>Geometry</div><div class="in"><i class="virt"></i></div>
    </article>
    <i class="cscroll"></i><i class="cvscroll"></i>
    <button class="flap nodeflap" aria-label="Show sidebar"><svg><use href="#left"/></svg></button>
  </div>
  <header class="bar">
    <button class="btn type" aria-label="Editor type"><svg class="i"><use href="#gn"/></svg><svg class="c"><use href="#down"/></svg></button>
    <select class="drop modsel" aria-label="Node tree type"><option>Modifier</option></select>
    <div class="menus"><button>View</button><button>Select</button><button>Add</button><button>Node</button></div>
    <div class="joined treeid">
      <button class="btn type off" aria-label="Browse node tree"><svg class="i"><use href="#ntree"/></svg><svg class="c"><use href="#down"/></svg></button>
      <label class="namebox treebox"><input aria-label="Node tree" value="Test2" disabled></label>
      <button class="btn sq off" aria-label="Fake user"><svg class="i"><use href="#shield"/></svg></button><button class="btn sq off" aria-label="New node tree"><svg class="i"><use href="#copy"/></svg></button><button class="btn sq off" aria-label="Unlink"><svg class="i"><use href="#x"/></svg></button>
    </div>
    <button class="bare" aria-label="Pin"><svg class="i"><use href="#pinned"/></svg></button>
    <div class="joined push"><button class="btn sq lit soft" aria-label="Snap"><svg class="i"><use href="#magnet"/></svg></button></div>
    <div class="joined lastset"><button class="btn sq blue" aria-label="Overlays"><svg class="i"><use href="#overlay"/></svg></button><button class="btn sq" aria-label="Overlay options"><svg class="c"><use href="#down"/></svg></button></div>
  </header>
  <div class="crumb"><svg class="i"><use href="#ntree"/></svg>Test2</div>
</section>

<section class="editor timeline">
  <header class="bar">
    <button class="btn type" aria-label="Editor type"><svg class="i"><use href="#clock"/></svg><svg class="c"><use href="#down"/></svg></button>
    <div class="joined"><button class="btn tmenu play">Playback<svg class="c"><use href="#down"/></svg></button><button class="btn tmenu key">Keying<svg class="c"><use href="#down"/></svg></button></div>
    <div class="menus tl"><button>View</button><button>Marker</button></div>
    <div class="joined auto"><button class="btn sq lit soft" aria-label="Auto keying"><svg class="i"><use href="#ring"/></svg></button><button class="btn sq off" aria-label="Auto keying options"><svg class="c"><use href="#down"/></svg></button></div>
    <div class="joined transport"><button class="btn sq lit" aria-label="Jump to start"><svg class="i"><use href="#first"/></svg></button><button class="btn sq lit" aria-label="Previous keyframe"><svg class="i"><use href="#prevkey"/></svg></button><button class="btn sq lit" aria-label="Play backwards"><svg class="i"><use href="#playback"/></svg></button><button class="btn sq lit" aria-label="Play"><svg class="i flip"><use href="#playback"/></svg></button><button class="btn sq lit" aria-label="Next keyframe"><svg class="i flip"><use href="#prevkey"/></svg></button><button class="btn sq lit" aria-label="Jump to end"><svg class="i flip"><use href="#first"/></svg></button></div>
    <input class="frame push" aria-label="Current frame" value="1">
    <div class="joined range"><button class="btn sq lit" aria-label="Use preview range"><svg class="i"><use href="#stopwatch"/></svg></button><label class="num start">Start<input value="1"></label><label class="num endf">End<input value="250"></label></div>
  </header>
  <div class="ruler"><span>10</span><span>20</span><span>30</span><span>40</span><span>50</span><span>60</span><span>70</span><span>80</span><span>90</span><span>100</span><span>110</span><span>120</span><span>130</span><span>140</span><span>150</span><span>160</span><span>170</span><span>180</span><span>190</span><span>200</span><span>210</span><span>220</span><span>230</span><span>240</span><span>250</span></div>
  <div class="track" id="track"><i class="tscroll"></i></div>
  <div class="playhead"><b>1</b></div>
  <button class="flap tlflap" aria-label="Show sidebar"><svg><use href="#left"/></svg></button>
</section>
</div>

<div class="col-right">
<section class="editor outliner">
  <header class="bar">
    <button class="btn type" aria-label="Editor type"><svg class="i"><use href="#tree"/></svg><svg class="c"><use href="#down"/></svg></button>
    <button class="btn type dm" aria-label="Display mode"><svg class="i"><use href="#images"/></svg><svg class="c"><use href="#down"/></svg></button>
    <label class="search"><svg class="i"><use href="#search"/></svg><input type="search" placeholder="Search" aria-label="Filter outliner"></label>
    <button class="btn type push" aria-label="Filter"><svg class="i"><use href="#funnel"/></svg><svg class="c"><use href="#down"/></svg></button>
    <button class="btn sq lit" aria-label="New collection"><svg class="i"><use href="#newcoll"/></svg></button>
  </header>
  <ul class="rows">
    <li class="d0"><svg class="i"><use href="#coll"/></svg><span>Scene Collection</span></li>
    <li class="d1 strong"><svg class="s"><use href="#open"/></svg><i class="chip"><svg class="i"><use href="#coll"/></svg></i><span>Collection</span><input type="checkbox" checked aria-label="Enable collection"><button aria-label="Hide"><svg class="i"><use href="#eye"/></svg></button><button aria-label="Disable in renders"><svg class="i"><use href="#cam"/></svg></button></li>
    <li class="d2"><svg class="s"><use href="#open"/></svg><i class="chip no orange"><svg class="i"><use href="#camobj"/></svg></i><span>Camera</span><button aria-label="Hide"><svg class="i"><use href="#eye"/></svg></button><button aria-label="Disable in renders"><svg class="i"><use href="#cam"/></svg></button></li>
    <li class="d3 leaf"><i class="chip green"><svg class="i"><use href="#camdata"/></svg></i><span>Camera</span></li>
    <li class="d2"><svg class="s"><use href="#open"/></svg><i class="chip no orange"><svg class="i"><use href="#light"/></svg></i><span>Light</span><button aria-label="Hide"><svg class="i"><use href="#eye"/></svg></button><button aria-label="Disable in renders"><svg class="i"><use href="#cam"/></svg></button></li>
    <li class="d3 leaf"><i class="chip no green"><svg class="i"><use href="#lightdata"/></svg></i><span>Light</span></li>
    <li class="d2 active"><svg class="s"><use href="#open"/></svg><i class="chip orange"><svg class="i"><use href="#meshobj"/></svg></i><span>Plane</span><button aria-label="Hide"><svg class="i"><use href="#eye"/></svg></button><button aria-label="Disable in renders"><svg class="i"><use href="#cam"/></svg></button></li>
    <li class="d3 leaf"><i class="chip no green"><svg class="i"><use href="#mesh"/></svg></i><span>Plane</span></li>
    <li class="d3"><svg class="s"><use href="#open"/></svg><i class="chip no azure"><svg class="i"><use href="#wrencho"/></svg></i><span>Modifiers</span></li>
    <li class="d4 strong"><svg class="s"><use href="#open"/></svg><i class="chip azure"><svg class="i"><use href="#gn"/></svg></i><span>GeometryNodes</span><button aria-label="Disable in renders"><svg class="i"><use href="#cam"/></svg></button></li>
    <li class="d5 leaf"><i class="chip no"><svg class="i"><use href="#ntree"/></svg></i><span>Test2</span></li>
  </ul>
</section>

<section class="editor props">
  <header class="bar">
    <button class="btn type" aria-label="Editor type"><svg class="i"><use href="#props"/></svg><svg class="c"><use href="#down"/></svg></button>
    <label class="search"><svg class="i"><use href="#search"/></svg><input type="search" placeholder="Search" aria-label="Search properties"></label>
    <button class="btn sq push" aria-label="Options"><svg class="c"><use href="#down"/></svg></button>
  </header>
  <div class="propbody">
    <nav class="ptabs">
      <button class="endgrp" aria-label="Tool"><svg class="i"><use href="#tools"/></svg></button>
      <button aria-label="Render"><svg class="i"><use href="#render"/></svg></button>
      <button aria-label="Output"><svg class="i"><use href="#output"/></svg></button>
      <button aria-label="View layer"><svg class="i"><use href="#images"/></svg></button>
      <button aria-label="Scene"><svg class="i"><use href="#scenes"/></svg></button>
      <button class="red endgrp" aria-label="World"><svg class="i"><use href="#world"/></svg></button>
      <button class="endgrp bright" aria-label="Collection"><svg class="i"><use href="#collo"/></svg></button>
      <button class="orange" aria-label="Object"><svg class="i"><use href="#object"/></svg></button>
      <button class="on" aria-label="Modifiers"><svg class="i"><use href="#wrench"/></svg></button>
      <button class="azure" aria-label="Particles"><svg class="i"><use href="#particles"/></svg></button>
      <button class="azure" aria-label="Physics"><svg class="i"><use href="#physics"/></svg></button>
      <button class="azure" aria-label="Constraints"><svg class="i"><use href="#constraint"/></svg></button>
      <button class="green" aria-label="Data"><svg class="i"><use href="#mesh"/></svg></button>
      <button class="red endgrp" aria-label="Material"><svg class="i"><use href="#material"/></svg></button>
    </nav>
    <div class="pmain">
      <div class="pcrumb"><svg class="i"><use href="#object"/></svg><span>Plane</span><svg class="s"><use href="#closed"/></svg><svg class="i"><use href="#gn"/></svg><span>GeometryNodes</span><svg class="i dim end"><use href="#pin"/></svg></div>
      <button class="addmod"><svg class="s"><use href="#plus"/></svg>Add Modifier</button>
      <div class="modcard">
        <div class="mrow">
          <svg class="s"><use href="#open"/></svg><svg class="i"><use href="#gn"/></svg>
          <div class="joined modset">
            <label class="namebox"><input aria-label="Modifier name" value="Geom..."></label>
            <button class="btn sq lit" aria-label="On cage"><svg class="i"><use href="#mesh"/></svg></button><button class="btn sq blue" aria-label="Edit mode"><svg class="i"><use href="#editmode"/></svg></button><button class="btn sq blue" aria-label="Realtime"><svg class="i"><use href="#monitor"/></svg></button><button class="btn sq blue" aria-label="Render"><svg class="i"><use href="#cam"/></svg></button><button class="btn sq" aria-label="More"><svg class="s"><use href="#open"/></svg></button>
          </div>
          <button class="bare" aria-label="Remove modifier"><svg class="i"><use href="#x"/></svg></button>
          <i class="grip"></i>
        </div>
        <div class="joined mtree">
          <button class="btn type" aria-label="Browse node group"><svg class="i"><use href="#ntree"/></svg><svg class="c"><use href="#down"/></svg></button>
          <label class="namebox"><input aria-label="Node group" value="Test2"></label>
          <button class="btn sq lit soft" aria-label="Fake user"><svg class="i"><use href="#shield"/></svg></button><button class="btn sq lit" aria-label="New node group"><svg class="i"><use href="#copy"/></svg></button><button class="btn sq lit" aria-label="Unlink"><svg class="i"><use href="#x"/></svg></button>
        </div>
        <button class="manage"><svg class="s"><use href="#closed"/></svg>Manage</button>
      </div>
    </div>
  </div>
</section>
</div>
</main>

<footer class="status">
  <span><svg><use href="#mouseL"/></svg>Select</span><span><svg><use href="#mouseM"/></svg>Pan View</span><span><svg class="flip"><use href="#mouseL"/></svg>Options</span>
  <span class="ver"><svg class="i"><use href="#net"/></svg>| 4.5.3</span>
</footer>

<div class="notes">
  <svg>
    <g fill="none" stroke-width="4"><rect x="10" y="320" width="249" height="341" rx="4" stroke="#3d97f5"/><rect x="803" y="889" width="226" height="417" rx="3" stroke="#ee4023"/></g>
    <g stroke-width="5" stroke-linecap="round"><path d="M286 333L208 279" stroke="#34c759"/><path d="M1423 732L1148 623" stroke="#34c759"/><path d="M143 880L124 694" stroke="#3d97f5"/><path d="M1130 1277L1066 1246" stroke="#ee4023" stroke-width="4"/></g>
    <path d="M197 270l19 3-8 5-1 9z" fill="#34c759"/><path d="M1134 617l18-2-5 8 3 9z" fill="#34c759"/><path d="M123 682l10 17-9-4-8 5z" fill="#3d97f5"/><path d="M1054 1240l18-1-6 6 1 10z" fill="#ee4023"/>
  </svg>
  <p class="note na">点这个看每一个子几何体的详细信息</p>
  <p class="note nb">对于根几何体来说,每个子几何体的属性信息</p>
  <p class="note nc">mesh的信息没变,保存的还是平面信息<br>但是instances有信息了<br>注意,instances本身只有一个,他是一个容器<br>这个容器持有了40个几何体的引用</p>
  <p class="note nd">这里的圆锥是几何体圆锥</p>
</div>
<script src="scene.js"></script>
</body>
</html>
```
FILE: styles.css
```css
* { box-sizing: border-box; }
html, body { margin: 0; }
body {
  position: relative;
  min-height: 100vh;
  display: grid;
  grid-template-rows: 33px 36px 1fr 32px;
  background: #181818;
  color: #e6e6e6;
  font-family: Inter, "Noto Sans CJK SC", sans-serif;
  font-size: 16px;
  line-height: 20px;
  font-feature-settings: "cv08" 1;
  overflow: hidden;
}
button, input, select { font: inherit; color: inherit; font-feature-settings: inherit; margin: 0; padding: 0; border: 0; background: none; outline: 0; }
button { display: inline-flex; align-items: center; justify-content: center; white-space: nowrap; }
h2, h3, p, ul { margin: 0; padding: 0; font-size: inherit; font-weight: 400; list-style: none; }
i, em { font-style: normal; }
svg { flex: none; display: block; }
.defs { position: absolute; width: 0; height: 0; }
.i { width: 22px; height: 22px; }
.s { width: 16px; height: 16px; }
.c { width: 12px; height: 12px; }
.dim { opacity: .5; }
.push { margin-left: auto; }
.flip { transform: scaleX(-1); }
.orange { color: #c8834b; }
.green { color: #10b389; }
.azure { color: #6587d3; }
.red { color: #b5575e; }

.titlebar { display: flex; align-items: center; gap: 11px; padding-bottom: 7px; border-top: 1px solid #000; color: #808080; font: 17px/22px "Open Sans", "Noto Sans", sans-serif; }
.app { width: 14px; height: 18px; }
.winctl { margin-left: auto; display: flex; gap: 54px; padding-right: 20px; }
.winctl svg { width: 16px; height: 16px; }

.topbar { display: flex; align-items: center; padding: 0 3px 6px 3px; }
.logo { width: 24px; height: 22px; }
.menus { display: flex; }
.menus button { padding: 0 12px; height: 27px; }
.topbar .menus { padding-left: 2px; }
.tabs { display: flex; align-self: flex-end; margin: 0 0 -6px 22px; gap: 2px; flex: 1; color: #999; }
.tabs button { height: 31px; padding: 0 15px 1px; background: #1d1d1d; border-radius: 6px 6px 0 0; }
.tabs .on { background: #303030; color: #fff; }
.tabs .add { padding: 0 10px; }
.idfield { margin-left: 8px; }
.topbar .btn { height: 28px; }

.btn { height: 27px; background: #282828; border: 1px solid #3d3d3d; border-radius: 6px; color: #e6e6e6; }
.type { width: 45px; gap: 1px; }
.sq { width: 28px; }
.lit { background: #545454; }
.blue { background: #4772b3; color: #fff; border-color: #4772b3; }
.off { background: #2b2b2b; color: #5a5a5a; }
.soft { color: #aaa; }
.faint { color: #888; background: #444; }
.joined { display: flex; }
.joined > * { border-radius: 0; }
.joined > * + * { margin-left: 1px; }
.joined > :first-child { border-radius: 6px 0 0 6px; }
.joined > :last-child { border-radius: 0 6px 6px 0; }
.joined > :only-child { border-radius: 6px; }
.namebox { display: flex; align-items: center; height: 27px; background: #1d1d1d; padding: 0 4px 0 11px; border: 1px solid #3d3d3d; }
.namebox input { width: 100%; min-width: 0; }
.topbar .namebox { height: 28px; }
.topbar .joined > * + * { margin-left: 0; }
.scenebox { width: 146px; }
.layerbox { width: 118px; }
.drop {
  appearance: none; height: 28px; border: 1px solid #3d3d3d; border-radius: 6px; padding: 0 20px 0 10px; background: #282828 url("data:image/svg+xml,%3Csvg xmlns='http://www.w3.org/2000/svg' width='12' height='12'%3E%3Cpath d='M2 4l4 4 4-4' fill='none' stroke='%23e6e6e6' stroke-width='1.600'/%3E%3C/svg%3E") no-repeat right 5px center;
}
.icondrop { display: flex; align-items: center; position: relative; }
.icondrop svg { position: absolute; left: 6px; }
.icondrop .drop { width: 100%; height: 27px; padding-left: 37px; }
.search { display: flex; align-items: center; gap: 11px; width: 174px; height: 28px; padding: 0 7px; background: #1d1d1d; border: 1px solid #3d3d3d; border-radius: 6px; font-size: 17px; }
.search input { width: 100%; min-width: 0; }
.search input::placeholder { color: #666; opacity: 1; }

.workspace { display: grid; grid-template-columns: minmax(0, 2103fr) minmax(0, 431fr); gap: 6px; padding-right: 2px; min-height: 0; }
.col-left { display: grid; grid-template-rows: minmax(0, 631fr) minmax(0, 671fr) 109px; gap: 6px; min-height: 0; }
.row-top { display: grid; grid-template-columns: minmax(0, 1120fr) minmax(0, 977fr); gap: 6px; min-height: 0; }
.col-right { display: grid; grid-template-rows: minmax(0, 514fr) minmax(0, 903fr); gap: 6px; min-height: 0; }
.editor { position: relative; overflow: hidden; border: 1px solid #3b3b3b; border-radius: 9px; background: #303030; display: flex; flex-direction: column; min-width: 0; }
.sheet, .nodes, .timeline { border-left: 0; border-radius: 0 9px 9px 0; }
.bar { display: flex; align-items: center; height: 37px; flex: none; padding: 0 9px 0 1px; }
.flap { position: absolute; width: 14px; height: 26px; background: #2a2a2a; color: #aaa; border-radius: 5px 0 0 5px; }
.flap svg { width: 12px; height: 16px; }

.sheet .bar { padding-right: 11px; }
.sheet .menus { padding-left: 7px; }
.sheet .joined > * + * { margin-left: 0; }
.sheetbody { flex: 1; display: flex; min-height: 0; }
.side { width: 256px; flex: none; background: #282828; overflow: hidden; color: #cfcfcf; }
.side .s { margin: 0 5px 0 9px; }
.ctx { height: 26px; padding-bottom: 10px; display: flex; align-items: center; background: #2e2e2e; }
.ctx .i { margin: 0 13px 0 5px; opacity: .8; }
.ctx .end { margin: 0 15px 0 auto; opacity: .5; }
.evalbox { padding: 7px 12px 8px 3px; color: #e6e6e6; }
.evalbox .drop { width: 100%; display: block; }
.sec { height: 34px; padding-bottom: 5px; display: flex; align-items: center; background: #2e2e2e; }
.sec .s { margin-right: 7px; }
.list li { display: flex; align-items: center; height: 27px; margin: 0 13px 5px 3px; padding-right: 8px; border-radius: 5px; }
.list .s { margin: 0 5px 0 8px; }
.list .i { margin: 0 13px 0 1px; }
.list em { margin-left: auto; color: #777; }
.list .sel { background: #4772b3; color: #fff; }
.list .sel em { color: #b4c5e0; }
.list .sub { padding-left: 49px; }
.list .none, .list .flat { padding-left: 29px; }
.list .none { color: #707070; }
.lined { position: relative; }
.lined::before { content: ""; position: absolute; left: 16px; top: -3px; bottom: -2px; width: 1px; background: #484848; }
.geolist { padding: 9px 0 5px; }
.domlist { padding-top: 9px; }
.tablewrap { flex: 1; position: relative; overflow: hidden; min-width: 0; background: #282828; }
table { table-layout: fixed; border-collapse: collapse; width: 923px; color: #c8c8c8; font-variant-numeric: tabular-nums; }
.w-idx { width: 44px; } .w-name { width: 285px; } .w-id { width: 135px; } .w-uv { width: 94px; } .w-pos { width: 90px; }
thead th { height: 31px; background: #303030; border-right: 1px solid #1c1c1c; border-bottom: 2px solid #202020; font-weight: 400; padding: 0 4px 0 0; }
td, tbody th { height: 29px; padding: 0 5px 1px; text-align: right; font-weight: 400; font-size: 17px; }
tbody th { background: #303030; }
tbody tr:nth-child(even) td { background: #2b2b2b; }
tbody tr:nth-child(even) th { background: #333; }
tbody th, td:nth-child(2), td:nth-child(3), td:nth-child(5) { border-right: 1px solid #1f1f1f; }
td:nth-child(2) { text-align: left; padding-left: 38px; position: relative; font-size: 16px; }
td .i { position: absolute; left: 3px; top: 4px; }
.vscroll { position: absolute; right: 0; top: 31px; bottom: 0; width: 7px; background: #3a3a3a; border-radius: 3px; }
.hscroll { position: absolute; left: 55px; right: 12px; bottom: 3px; height: 5px; background: #3d3d3d; border-radius: 3px; }
.sheetflap { right: 0; top: 32px; }
.counts { height: 37px; flex: none; display: flex; align-items: center; justify-content: flex-end; padding-right: 11px; font-size: 17px; }

.scene { position: absolute; inset: 0; width: 100%; height: 100%; }
.view .bar, .subbar, .stage { position: relative; }
.view .bar { background: #333; padding: 0 0 2px 11px; gap: 9px; height: 39px; }
.view .menus { margin-left: -2px; }
.mode { width: 162px; }
.orient { width: 113px; }
.gapped { margin-left: 15px; }
.view .joined > * + * { margin-left: 0; }
.subbar { display: flex; justify-content: space-between; }
.subleft { background: #333; padding: 4px 12px 5px 11px; border-radius: 0 0 6px 0; }
.subright { background: #333; padding: 4px 12px 5px 13px; border-radius: 0 0 0 6px; }
.subleft .lit { color: #c4c4c4; }
.opt { width: 97px; gap: 12px; padding-left: 7px; }
.stage { flex: 1; display: flex; align-items: flex-start; }
.toolbox { display: flex; flex-direction: column; gap: 8px; padding: 12px 0 0 12px; }
.toolset { display: flex; flex-direction: column; gap: 1px; border-radius: 7px; overflow: hidden; background: #3a3a3a; box-shadow: 0 1px 2px #2228; }
.toolset button { position: relative; width: 58px; height: 49px; background: #282828; }
.toolset .on { background: #4772b3; }
.toolset svg { width: 36px; height: 36px; }
.more::after { content: ""; position: absolute; right: 3px; bottom: 3px; border: 3px solid transparent; border-right-color: #999; border-bottom-color: #999; }
.viewinfo { margin: 11px 0 0 26px; line-height: 27px; color: #fff; text-shadow: 0 0 2px #000, 0 1px 2px #000; }
.navset { margin: 18px 13px 0 auto; display: flex; flex-direction: column; align-items: flex-end; }
.navball { width: 106px; height: 106px; margin: 0 7px -16px 0; }
.axis { font-size: 15px; font-weight: 700; text-anchor: middle; fill: #12233a; }
.negz { width: 24px; height: 24px; margin: 0 50px 4px 0; }
.navset button { width: 42px; height: 42px; border-radius: 21px; background: #2b2b2b; color: #ddd; margin-bottom: 3px; }
.navset button svg { width: 24px; height: 24px; }
.viewflap { right: 0; top: 31px; background: #353535; }

.nodes { background: #1d1d1d; }
.canvas { position: absolute; inset: -1px 0 0 0; background: radial-gradient(circle at 50% 50%, #262626 1px, transparent 1px) -19px 17px / 127px 127px #1d1d1d; overflow: hidden; font-size: 15px; }
.nodes .bar, .crumb { position: relative; }
.nodes .bar { height: 35px; }
.nodes .off { background: #262626; color: #555; border-color: #333; }
.modsel { width: 116px; margin-left: 8px; margin-right: 6px; }
.treeid { margin-left: 463px; color: #808080; }
.treebox { width: 117px; border-color: #333; }
.treeid > * + * { margin-left: 0; }
.nodes .bare { margin-left: 11px; }
.nodes .lastset { margin: 0 3px 0 9px; }
.lastset > * + * { margin-left: 0; }
.crumb { display: flex; align-items: center; gap: 14px; padding: 22px 0 0 18px; }
.links { position: absolute; inset: 0; width: 100%; height: 100%; fill: none; stroke: #00d6a3; stroke-width: 3; }
.links .hot { stroke: #a5f1dc; }
.node { position: absolute; background: #303030; border-radius: 6px; box-shadow: 0 3px 10px #000a; padding-bottom: 4px; line-height: 18px; }
.n-dist { left: 493px; top: 163px; width: 215px; }
.n-gin { left: 198px; top: 548px; width: 177px; height: 87px; }
.n-cone { left: 828px; top: 218px; width: 177px; }
.n-inst { left: 1156px; top: 104px; width: 177px; padding-bottom: 5px; }
.n-join { left: 1428px; top: 563px; width: 176px; height: 36px; border-radius: 18px; background: #1d725e; display: flex; align-items: center; padding: 0 10px 0 13px; gap: 1px; }
.n-join span { flex: 1; font-size: 14px; }
.n-join b { width: 5px; height: 10px; border: 1px solid #46907f; border-width: 0 1px; }
.n-gout { left: 1700px; top: 505px; width: 178px; height: 88px; outline: 1px solid #fff; outline-offset: -1px; }
.node h3 { height: 25px; display: flex; align-items: center; gap: 5px; padding: 0 0 2px 11px; background: #1d725e; border-radius: 6px 6px 0 0; margin-bottom: 4px; white-space: nowrap; font-size: 14px; }
.n-dist h3 { margin-bottom: 5px; }
.dark h3 { background: #1d1d1d; }
.node h3 .s { width: 15px; height: 15px; }
.out, .in, .ctl { position: relative; height: 27px; display: flex; align-items: center; padding: 0 13px 1px; }
.out { justify-content: flex-end; }
.ctl { padding: 0 12px 1px; }
.n-cone .ctl:nth-last-child(-n+2) { height: 26px; }
.gap { margin-top: 6px; }
.first { margin-top: 4px; }
.node i { position: absolute; width: 12px; height: 12px; border-radius: 6px; left: -6px; background: #00d6a3; border: 1px solid #16161688; }
.node .out i { left: auto; right: -6px; }
.node .dia { border-radius: 0; transform: rotate(45deg); width: 10px; height: 10px; left: -5px; }
.node .out .dia { right: -5px; }
.node .vec { background: #6363c7; }
.node .rot { background: #a55ac7; }
.node .bool { background: #cca6d6; }
.node .flt { background: #a1a1a1; }
.node .int { background: #598c5c; }
.node .virt { background: #2c2c2c; border-color: #808080; }
.node .dot::after { content: ""; position: absolute; left: 3px; top: 3px; width: 2px; height: 2px; background: #222; }
.n-join .l { left: -7px; }
.n-join .r { left: auto; right: -6px; }
.node .drop { width: 100%; height: 23px; border-radius: 4px; padding-left: 8px; }
.split span { flex: none; width: 67px; padding-left: 4px; }
.split .drop { flex: 1; width: 0; }
.num { display: flex; align-items: center; width: 100%; height: 23px; background: #545454; border-radius: 4px; padding: 0 18px 0 19px; white-space: nowrap; }
.num input { flex: 1; width: 0; min-width: 0; text-align: right; }
.vecbox { margin: 1px 12px; height: 73px; display: flex; flex-direction: column; gap: 1px; }
.vecbox .num { flex: 1; border-radius: 0; }
.vecbox .num:first-child { border-radius: 4px 4px 0 0; }
.vecbox .num:last-child { border-radius: 0 0 4px 4px; }
.tick { display: flex; align-items: center; gap: 3px; }
.tick input { appearance: none; width: 17px; height: 17px; background: #545454; border-radius: 3px; }
.cscroll { position: absolute; left: 0; width: 73%; bottom: 2px; height: 5px; background: #2e2e2e; border-radius: 3px; }
.cvscroll { position: absolute; right: 3px; top: 40px; height: 443px; width: 6px; background: #2e2e2e; border-radius: 3px; }
.nodeflap { right: 0; top: 69px; background: #1b1b1b; }

.timeline .bar { gap: 9px; height: 37px; padding-right: 12px; }
.tmenu { justify-content: space-between; padding: 0 3px 0 10px; }
.play { width: 105px; } .key { width: 92px; }
.timeline .joined > * + * { margin-left: 0; }
.timeline .menus { margin-left: -7px; }
.timeline .auto { margin-left: 510px; }
.transport .sq { width: 29px; border-left-color: #444; }
.frame, .range .num { height: 27px; background: #545454; }
.frame { width: 108px; border-radius: 6px; text-align: center; }
.range .start { width: 129px; padding: 0 20px 0 23px; border-left: 1px solid #3d3d3d; border-radius: 0; }
.range .endf { width: 124px; border-radius: 0 6px 6px 0; padding: 0 21px 0 22px; border-left: 1px solid #3d3d3d; }
.range input, .frame { font-size: 17px; }
.ruler, .track { display: grid; grid-template-columns: 477fr repeat(25, 373fr) 193fr; }
.ruler span:first-of-type, .track span:first-of-type { grid-column: 2; }
.ruler { height: 35px; align-items: center; background: #1b1b1b; color: #a0a0a0; text-align: center; font-size: 17px; }
.track { flex: 1; position: relative; background: linear-gradient(90deg, #222 3.230%, #303030 3.230% 96.300%, #222 96.300%); }
.track span { border-left: 1px solid #272727; background: linear-gradient(#1a1a1a, #1a1a1a) 50% 0 / 1px 100% no-repeat; }
.tscroll { position: absolute; left: 4px; right: 14px; bottom: 3px; height: 5px; background: #40404099; border-radius: 3px; }
.playhead { position: absolute; left: 51px; top: 41px; bottom: 0; width: 35px; display: flex; flex-direction: column; align-items: center; }
.playhead b { font-weight: 400; font-size: 17px; width: 35px; height: 26px; line-height: 26px; text-align: center; background: #4772b3; color: #fff; border-radius: 6px; }
.playhead::after { content: ""; flex: 1; width: 2px; background: #4772b3; }
.tlflap { right: 0; bottom: 12px; background: #292929; }

.outliner { background: #282828; }
.outliner .bar { padding: 0 1px 2px 9px; gap: 8px; height: 39px; }
.outliner .search { margin-left: 15px; }
.rows { flex: 1; position: relative; background: repeating-linear-gradient(#282828 0 29px, #2b2b2b 29px 58px); color: #b8b8b8; }
.rows::before { content: ""; position: absolute; left: 41px; top: 64px; height: 247px; width: 1px; background: #5c5c5c; z-index: 1; }
.rows li { height: 29px; display: flex; align-items: center; padding-right: 6px; }
.rows li > span { flex: 1; margin-left: 5px; }
.rows li > button { width: 22px; margin-left: 7px; color: #e6e6e6; }
.rows .s { margin-right: 7px; color: #ccc; }
.rows .chip { width: 28px; height: 27px; display: flex; align-items: center; justify-content: center; border-radius: 6px; background: #4a4a4a; border: 1px solid #5c5c5c; }
.rows .no { background: none; border-color: transparent; }
.d0 { padding-left: 31px; } .rows .d0 span { margin-left: 9px; }
.d0 .i { color: #d8d8d8; }
.d1 { padding-left: 35px; } .d2 { padding-left: 64px; } .d3 { padding-left: 93px; } .d4 { padding-left: 122px; } .d5 { padding-left: 151px; }
.rows .d3.leaf { padding-left: 116px; } .rows .d5.leaf { padding-left: 174px; }
.rows .strong { color: #fff; }
.strong .chip { color: #e0e0e0; } .strong .azure { color: #6587d3; }
.rows .active { background: #334d80; }
.active span { color: #f5a93a; }
.rows .active .chip { background: #5f708f; border-color: #73829d; }
.rows input { appearance: none; width: 16px; height: 16px; border-radius: 2px; margin-right: 4px; background: #e6e6e6 url("data:image/svg+xml,%3Csvg xmlns='http://www.w3.org/2000/svg' width='16' height='16'%3E%3Cpath d='M3 8l3 4 7-8' fill='none' stroke='%23222' stroke-width='2.500'/%3E%3C/svg%3E"); }

.props .bar { padding: 0 1px 2px 10px; height: 36px; }
.props .search { margin-left: 76px; }
.propbody { flex: 1; display: flex; min-height: 0; }
.ptabs { width: 43px; flex: none; background: #1c1c1c; padding-top: 13px; display: flex; flex-direction: column; color: #b0b0b0; }
.ptabs button { height: 38px; flex: none; margin: 0 0 2px 3px; border-radius: 6px 0 0 6px; }
.ptabs .endgrp { margin-bottom: 13px; box-shadow: 0 3px 0 -2px #262626; }
.ptabs .bright { margin-bottom: 16px; color: #ddd; }
.ptabs .red { color: #b5575e; } .ptabs .orange { color: #c8834b; } .ptabs .azure { color: #6587d3; } .ptabs .green { color: #10b389; }
.ptabs .on { background: #303030; color: #74a0ff; }
.pmain { flex: 1; padding: 11px 2px 0 11px; min-width: 0; }
.pcrumb { display: flex; align-items: center; height: 30px; padding-left: 4px; }
.pcrumb span { margin-left: 13px; }
.pcrumb .s { margin: 0 10px 0 20px; }
.pcrumb .end { margin: 0 3px 0 auto; }
.addmod { position: relative; width: 100%; height: 28px; margin: 24px 0 15px; padding-left: 27px; background: #545454; border-radius: 6px; }
.addmod .s { position: absolute; left: 10px; }
.modcard { border: 1px solid #4772b3; border-radius: 6px; background: #3c3c3c; height: 118px; padding: 5px 11px 0 11px; }
.mrow { display: flex; align-items: center; }
.mrow > .i { margin: 0 15px 0 4px; }
.modset { flex: none; }
.modset .namebox { width: 83px; padding-right: 0; }
.mrow .bare { margin: 0 auto 0 4px; }
.grip { width: 16px; height: 8px; background: radial-gradient(circle, #888 1px, transparent 1px) 0 0 / 4px 4px; margin-right: 2px; }
.mtree { margin: 15px 0 9px 1px; }
.mtree .namebox { flex: 1; border: 0; }
.manage { gap: 8px; height: 28px; margin-left: 7px; }

.status { display: flex; align-items: center; gap: 15px; padding: 0 10px 2px 4px; color: #999; font-size: 17px; }
.status span { display: flex; align-items: center; gap: 1px; }
.status span > svg:not(.i) { width: 18px; height: 24px; }
.status .ver { margin-left: auto; gap: 12px; }

.notes { position: absolute; inset: 0; pointer-events: none; font-family: "Noto Sans", "Noto Sans CJK SC", sans-serif; font-size: 32px; line-height: 42px; white-space: nowrap; }
.notes svg { position: absolute; inset: 0; width: 100%; height: 100%; }
.note { position: absolute; }
.na { left: 320px; top: 350px; color: #34c759; }
.nb { left: 1412px; top: 756px; color: #34c759; }
.nc { left: 45px; top: 887px; color: #3d97f5; }
.nd { left: 1079px; top: 1308px; color: #ee4023; }
```
FILE: scene.js
```js
// Builds the floor grid, the instanced cones and the timeline ticks.
const NS = "http://www.w3.org/2000/svg";
function add(parent, name, attrs) {
  const el = document.createElementNS(NS, name);
  for (const key in attrs) el.setAttribute(key, attrs[key]);
  parent.appendChild(el);
}

// Floor lines run towards two vanishing points on the horizon.
const floor = document.getElementById("floor");
const horizon = 120;
for (let k = 1; k < 22; k++) {
  const run = 3.53 + 1.73 * k;
  add(floor, "line", { x1: 1126, y1: horizon + 449 / run, x2: 2103, y2: horizon + 1426 / run });
}
for (let k = -2; k < 22; k++) {
  if (k === 0) continue;
  const run = 2.33 + 1.35 * k;
  add(floor, "line", { x1: 2230, y1: horizon, x2: 2230 - 580 * run, y2: horizon + 580 });
}

// Each cone: apex, left rim, bottom rim, right rim.
const cones = [
  [942,62,912,178,940,193,974,178],[802,90,769,205,790,222,835,200],[894,105,859,232,893,248,928,232],
  [1004,145,964,282,1005,300,1039,285],[710,77,680,190,705,210,750,195],[729,83,700,190,735,215,766,205],
  [634,100,603,220,625,240,674,225],[533,140,508,240,535,260,565,255],[563,152,545,280,570,307,604,295],
  [504,162,471,300,505,327,547,310],[723,125,685,250,715,270,760,260],[642,150,608,290,643,310,687,290],
  [728,130,697,265,735,291,773,268],[819,140,783,268,820,291,857,270],[1126,168,1079,310,1130,335,1161,320],
  [1223,146,1177,280,1225,302,1255,290],[378,222,343,370,365,400,410,390],[402,265,368,440,403,462,466,425],
  [302,293,266,485,302,500,370,460],[1330,215,1300,380,1340,420,1365,385],[1318,230,1260,375,1310,430,1365,400],
  [1443,290,1372,465,1455,497,1482,480],[1297,318,1230,490,1285,527,1340,500],[1352,350,1284,535,1365,577,1396,560],
  [703,290,665,440,700,470,740,450],[752,287,725,440,745,480,790,440],[788,287,755,440,800,490,840,460],
  [754,315,725,460,755,500,790,480],[970,288,918,462,977,491,1018,468],[626,330,580,520,630,548,682,530],
  [785,353,735,540,790,580,844,535],[547,415,520,600,560,640,620,605],[525,437,473,650,528,696,603,635],
  [710,400,655,605,714,643,774,590],[1051,437,984,645,1060,692,1106,635],[915,548,843,780,925,843,983,770],
  [1212,650,1119,895,1227,980,1274,935],[650,640,582,895,655,970,739,880],[970,890,869,1190,983,1305,1060,1165]
];
const group = document.getElementById("cones");
const place = (x, y) => [Math.round(11200 + x / 0.1742) / 10, Math.round(2500 + y / 0.3) / 10].join(",");
for (const [ax, ay, lx, ly, bx, by, rx, ry] of cones) {
  const a = place(ax, ay);
  const l = place(lx, ly);
  const bl = place(lx + (bx - lx) * 0.33, ly + (by - ly) * 0.75);
  const b = place(bx, by);
  const br = place(bx + (rx - bx) * 0.8, by - (by - ry) * 0.36);
  const r = place(rx, ry);
  add(group, "polygon", { points: [a, l, bl].join(" "), fill: "#9b9d9d" });
  add(group, "polygon", { points: [a, bl, b].join(" "), fill: "#b0b2b2" });
  add(group, "polygon", { points: [a, b, br].join(" "), fill: "#8e9090" });
  add(group, "polygon", { points: [a, br, r].join(" "), fill: "#4a4a4b" });
  add(group, "polygon", { points: [a, l, bl, b, br, r].join(" "), fill: "none", stroke: "#f29a3c", "stroke-width": 2, "stroke-linejoin": "round" });
}

const track = document.getElementById("track");
for (let frame = 10; frame <= 250; frame += 10) track.appendChild(document.createElement("span"));
```
